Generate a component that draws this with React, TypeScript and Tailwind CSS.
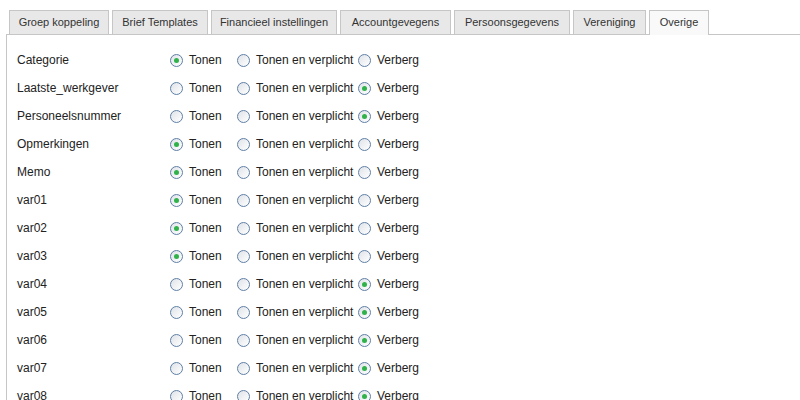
const tabs = [
  { label: "Groep koppeling", w: "w-[100px]" },
  { label: "Brief Templates", w: "w-[96px]" },
  { label: "Financieel instellingen", w: "w-[126px]" },
  { label: "Accountgevegens", w: "w-[111px]" },
  { label: "Persoonsgegevens", w: "w-[116px]" },
  { label: "Vereniging", w: "w-[73px]" },
];

// 0 = Tonen, 1 = Tonen en verplicht, 2 = Verberg
const rows: [string, number][] = [
  ["Categorie", 0],
  ["Laatste_werkgever", 2],
  ["Personeelsnummer", 2],
  ["Opmerkingen", 0],
  ["Memo", 0],
  ["var01", 0],
  ["var02", 0],
  ["var03", 0],
  ["var04", 2],
  ["var05", 2],
  ["var06", 2],
  ["var07", 2],
  ["var08", 2],
];

function Radio({ checked }: { checked: boolean }) {
  return (
    <span className="flex h-[13px] w-[13px] shrink-0 items-center justify-center rounded-full border border-[#5f7fa5] bg-gradient-to-br from-[#dfe3e8] to-white">
      {checked && <span className="h-[5px] w-[5px] rounded-full bg-[#2fb24a]" />}
    </span>
  );
}

export default function App() {
  return (
    <div className="h-[400px] w-[800px] overflow-hidden bg-white pt-[10px] text-[12px] text-[#222] [font-family:'Liberation_Sans',Arial,sans-serif]">
      {/* ── Tabs ─────────────────────────── */}
      <div className="flex h-[24px] items-end gap-[3px] pl-[9px] text-[11px]">
        {tabs.map((t) => (
          <div
            key={t.label}
            className={`flex h-[24px] ${t.w} shrink-0 items-center justify-center border border-b-0 border-[#c6c6c6] bg-[#e8e8e8] text-[#333]`}
          >
            {t.label}
          </div>
        ))}
        <div className="relative z-10 -mb-px flex h-[25px] w-[60px] shrink-0 items-center justify-center border border-b-0 border-[#c6c6c6] bg-[#f9f9f9] pb-px text-[#333]">
          Overige
        </div>
      </div>

      {/* ── Panel ────────────────────────── */}
      <div className="ml-[6px] h-[400px] border-l border-t border-[#c6c6c6] pl-[10px] pt-[11px]">
        {rows.map(([name, sel]) => (
          <div key={name} className="flex h-[28px] items-center">
            <div className="w-[153px]">{name}</div>
            <div className="flex w-[67px] items-center gap-[6px]">
              <Radio checked={sel === 0} />
              <span>Tonen</span>
            </div>
            <div className="flex w-[121px] items-center gap-[6px]">
              <Radio checked={sel === 1} />
              <span>Tonen en verplicht</span>
            </div>
            <div className="flex items-center gap-[6px]">
              <Radio checked={sel === 2} />
              <span>Verberg</span>
            </div>
          </div>
        ))}
      </div>
    </div>
  );
}
